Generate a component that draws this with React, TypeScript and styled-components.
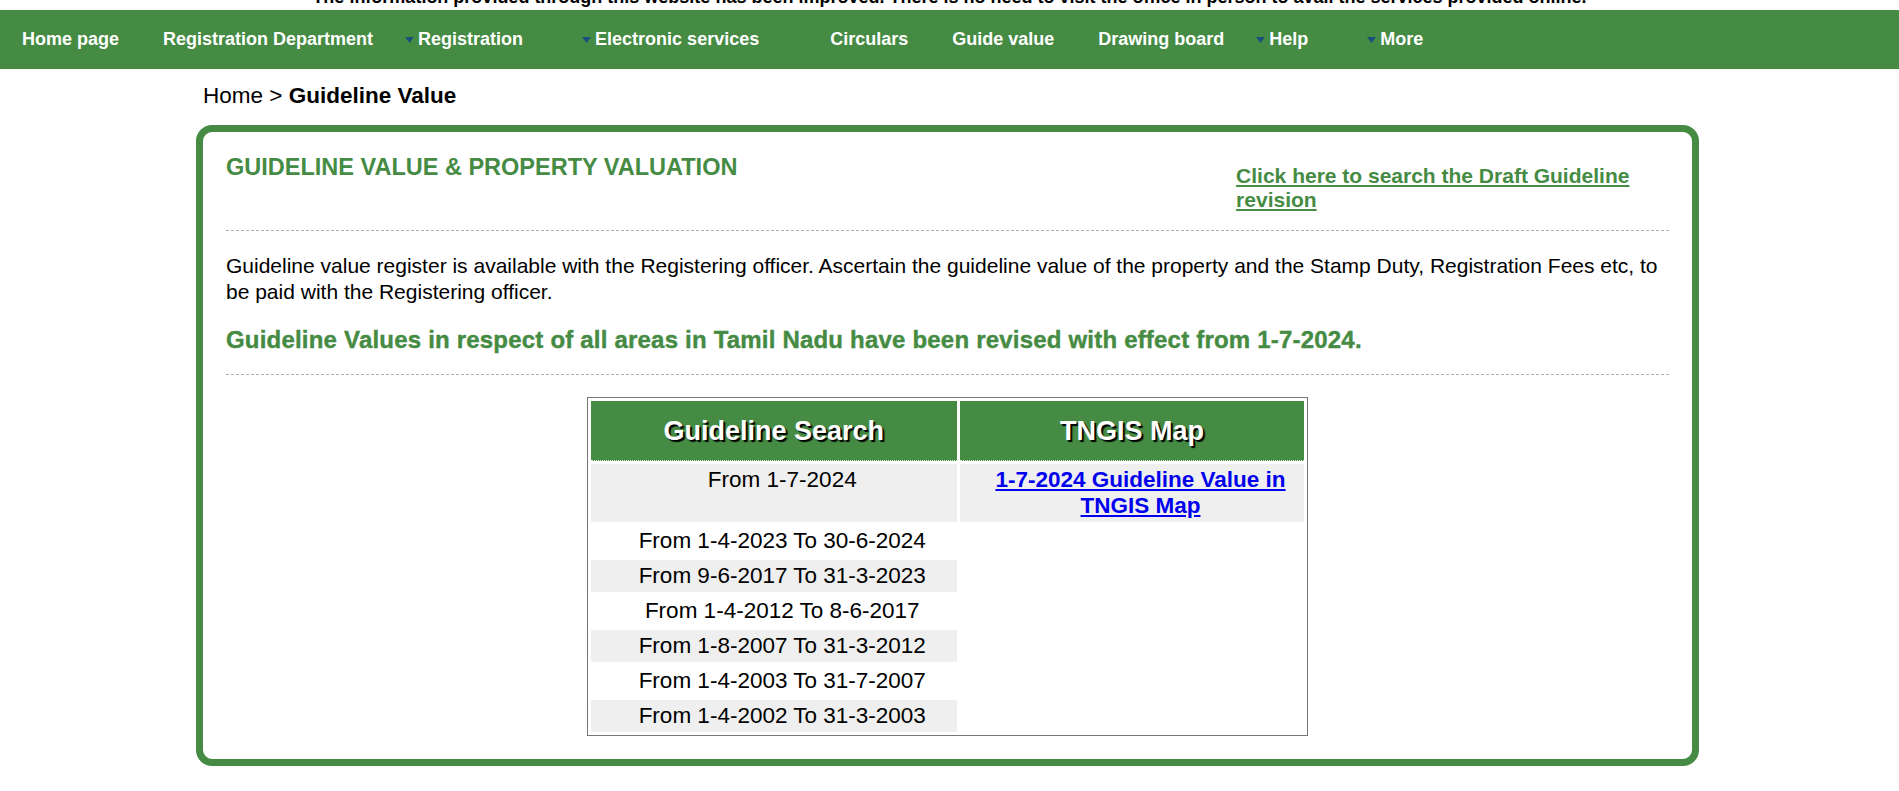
import React from 'react';
import styled, { createGlobalStyle } from 'styled-components';

const green = '#458b43';

const GlobalStyle = createGlobalStyle`
  body {
    margin: 0;
    background: #fff;
    color: #000;
    font-family: "Liberation Sans", Arial, sans-serif;
  }
`;

const menu = [
  { label: 'Home page' },
  { label: 'Registration Department' },
  { label: 'Registration', drop: true },
  { label: 'Electronic services', drop: true },
  { label: 'Circulars' },
  { label: 'Guide value' },
  { label: 'Drawing board' },
  { label: 'Help', drop: true },
  { label: 'More', drop: true },
];

const periods = [
  'From 1-4-2023 To 30-6-2024',
  'From 9-6-2017 To 31-3-2023',
  'From 1-4-2012 To 8-6-2017',
  'From 1-8-2007 To 31-3-2012',
  'From 1-4-2003 To 31-7-2007',
  'From 1-4-2002 To 31-3-2003',
];

const Caret = () => (
  <svg width="9" height="6" viewBox="0 0 9 6">
    <polygon points="0,0 9,0 4.5,6" fill="#1d4f7c" />
  </svg>
);

const App: React.FC = () => (
  <>
    <GlobalStyle />
    <Notice>
      <span>
        The information provided through this website has been improved. There is no need to visit the office in
        person to avail the services provided online.
      </span>
    </Notice>
    <NavBar>
      {menu.map(item => (
        <NavItem key={item.label} href="#" $drop={!!item.drop}>
          {item.drop && <Caret />}
          {item.label}
        </NavItem>
      ))}
    </NavBar>
    <Main>
      <Breadcrumb>
        Home &gt; <b>Guideline Value</b>
      </Breadcrumb>
      <Panel>
        <HeaderRow>
          <Heading>GUIDELINE VALUE &amp; PROPERTY VALUATION</Heading>
          <DraftLink href="#">Click here to search the Draft Guideline revision</DraftLink>
        </HeaderRow>
        <Intro>
          Guideline value register is available with the Registering officer. Ascertain the guideline value of the
          property and the Stamp Duty, Registration Fees etc, to be paid with the Registering officer.
        </Intro>
        <Revised>Guideline Values in respect of all areas in Tamil Nadu have been revised with effect from 1-7-2024.</Revised>
        <ValueTable>
          <thead>
            <tr>
              <HeadCell style={{ width: 366 }}>Guideline Search</HeadCell>
              <HeadCell>TNGIS Map</HeadCell>
            </tr>
          </thead>
          <tbody>
            <tr>
              <Cell $shade>From 1-7-2024</Cell>
              <Cell $shade>
                <MapLink href="#">1-7-2024 Guideline Value in TNGIS Map</MapLink>
              </Cell>
            </tr>
            {periods.map((p, i) => (
              <tr key={p}>
                <Cell $shade={i % 2 === 1}>{p}</Cell>
                <Cell />
              </tr>
            ))}
          </tbody>
        </ValueTable>
      </Panel>
    </Main>
  </>
);

export default App;

const Notice = styled.div`
  height: 10px;
  overflow: hidden;
  text-align: center;
  font-size: 18px;
  font-weight: bold;
  line-height: 20px;

  span {
    display: block;
    margin-top: -13px;
  }
`;

const NavBar = styled.nav`
  display: flex;
  align-items: center;
  height: 59px;
  background: ${green};
`;

const NavItem = styled.a<{ $drop: boolean }>`
  display: flex;
  align-items: center;
  gap: 4px;
  padding: ${({ $drop }) => ($drop ? '0 49px 0 10px' : '0 22px')};
  color: #fff;
  font-size: 18px;
  font-weight: bold;
  text-decoration: none;
  white-space: nowrap;
`;

const Main = styled.main`
  width: 1503px;
  margin-left: 196px;
`;

const Breadcrumb = styled.div`
  padding: 14px 0 16px 7px;
  font-size: 22.5px;
  line-height: 26px;
`;

const Panel = styled.section`
  border: 7px solid ${green};
  border-radius: 16px;
  padding: 20px 23px 23px;
`;

const HeaderRow = styled.div`
  display: flex;
  justify-content: space-between;
  align-items: flex-start;
  padding-bottom: 18px;
  border-bottom: 1px dashed #b3b3b3;
`;

const Heading = styled.h2`
  margin: 2px 0 0;
  color: ${green};
  font-size: 23.5px;
  line-height: 26px;
`;

const DraftLink = styled.a`
  width: 30%;
  margin-top: 12px;
  color: ${green};
  font-size: 21px;
  font-weight: bold;
  line-height: 24px;
`;

const Intro = styled.p`
  margin: 22px 0 0;
  font-size: 21px;
  line-height: 26px;
`;

const Revised = styled.p`
  margin: 21px 0 0;
  padding-bottom: 20px;
  border-bottom: 1px dashed #b3b3b3;
  color: ${green};
  font-size: 24px;
  font-weight: bold;
  line-height: 28px;
  letter-spacing: 0.2px;
  -webkit-text-stroke: 0.4px ${green};
`;

const ValueTable = styled.table`
  width: 50%;
  margin: 22px auto 0;
  border: 1px solid #777;
  border-spacing: 3px;
`;

const HeadCell = styled.th`
  padding: 15px 0 14px;
  background: ${green};
  border-bottom: 1px dotted #dfeede;
  color: #fff;
  font-size: 27px;
  line-height: 30px;
  text-shadow: 2px 2px 1px #000;
`;

const Cell = styled.td<{ $shade?: boolean }>`
  padding: 3px 3px 3px 20px;
  background: ${({ $shade }) => ($shade ? '#efefef' : '#fff')};
  font-size: 22.5px;
  line-height: 26px;
  text-align: center;
  vertical-align: top;
`;

const MapLink = styled.a`
  color: #0000ee;
  font-weight: bold;
`;
